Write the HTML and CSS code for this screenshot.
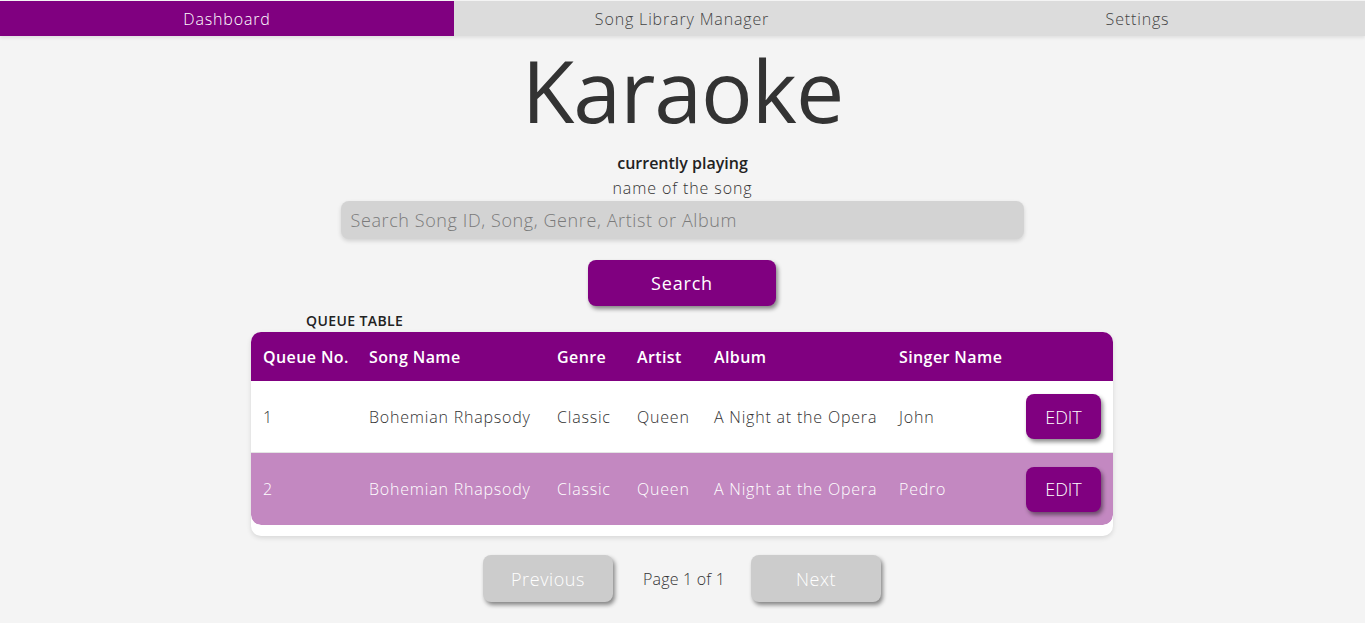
FILE: index.html
```html
<!DOCTYPE html>
<html lang="en">
<head>
<meta charset="utf-8">
<title>Karaoke</title>
<link rel="stylesheet" href="styles.css">
</head>
<body>
<nav class="tabs">
  <a class="tab active">Dashboard</a>
  <a class="tab">Song Library Manager</a>
  <a class="tab">Settings</a>
</nav>
<main class="page">
  <h1 class="title">Karaoke</h1>
  <div class="now">
    <div class="now-label">currently playing</div>
    <div class="now-song">name of the song</div>
  </div>
  <input class="search-input" type="text" placeholder="Search Song ID, Song, Genre, Artist or Album">
  <button class="search-btn">Search</button>
  <section class="queue">
    <div class="queue-label">QUEUE TABLE</div>
    <div class="queue-card">
      <table class="queue-table">
        <colgroup>
          <col class="c-no"><col class="c-song"><col class="c-genre"><col class="c-artist"><col class="c-album"><col class="c-singer"><col class="c-act">
        </colgroup>
        <thead>
          <tr><th>Queue No.</th><th>Song Name</th><th>Genre</th><th>Artist</th><th>Album</th><th>Singer Name</th><th></th></tr>
        </thead>
        <tbody>
          <tr><td>1</td><td>Bohemian Rhapsody</td><td>Classic</td><td>Queen</td><td>A Night at the Opera</td><td>John</td><td><button class="edit-btn">EDIT</button></td></tr>
          <tr class="alt"><td>2</td><td>Bohemian Rhapsody</td><td>Classic</td><td>Queen</td><td>A Night at the Opera</td><td>Pedro</td><td><button class="edit-btn">EDIT</button></td></tr>
        </tbody>
      </table>
    </div>
  </section>
  <div class="pager">
    <button class="pager-btn">Previous</button>
    <span class="pager-info">Page 1 of 1</span>
    <button class="pager-btn">Next</button>
  </div>
</main>
</body>
</html>
```

FILE: styles.css
```css
* { box-sizing: border-box; }
body {
  margin: 0;
  background: #f4f4f4;
  font-family: "Open Sans", "Noto Sans", sans-serif;
  color: #333;
}
.tabs {
  display: grid;
  grid-template-columns: 454px 456px 455px;
  height: 36px;
  padding-top: 1px;
  background: #dcdcdc;
  border-top: 1px solid #f4f4f4;
  box-shadow: 0 2px 3px rgba(0,0,0,0.08);
}
.tab {
  display: flex;
  align-items: center;
  justify-content: center;
  margin-top: -1px;
  color: #444;
  font-size: 16px;
  font-weight: 300;
  letter-spacing: 0.85px;
}
.tab.active {
  background: #800080;
  color: #fff;
}
.page {
  display: flex;
  flex-direction: column;
  align-items: center;
}
.title {
  margin: 11px 0 0;
  font-size: 86px;
  line-height: 86px;
  font-weight: 400;
  color: #333;
  letter-spacing: -1px;
}
.now {
  margin-top: 18px;
  text-align: center;
  font-size: 16px;
  line-height: 25px;
}
.now-label { font-weight: 600; color: #222; }
.now-song { font-weight: 300; color: #333; letter-spacing: 0.9px; }
.search-input {
  width: 683px;
  height: 38px;
  margin-right: 1px;
  border: none;
  border-radius: 8px;
  background: #d3d3d3;
  padding: 0 10px;
  font-family: inherit;
  font-size: 18px;
  font-weight: 300;
  letter-spacing: 0.6px;
  color: #333;
  box-shadow: 0 2px 4px rgba(0,0,0,0.15);
  outline: none;
}
.search-input::placeholder { color: #7a7a7a; }
.search-btn {
  margin-top: 21px;
  margin-right: 1px;
  width: 188px;
  height: 46px;
  border: none;
  border-radius: 8px;
  background: #800080;
  color: #fff;
  font-family: inherit;
  font-size: 18px;
  font-weight: 400;
  letter-spacing: 0.8px;
  box-shadow: 2px 3px 4px rgba(0,0,0,0.45);
}
.queue {
  width: 862px;
  margin-top: 4px;
  margin-right: 1px;
}
.queue-label {
  padding-left: 55px;
  font-size: 14px;
  line-height: 22px;
  font-weight: 600;
  letter-spacing: 0.4px;
  color: #222;
}
.queue-card {
  background: #fff;
  border-radius: 10px;
  padding-bottom: 11px;
  box-shadow: 0 2px 5px rgba(0,0,0,0.12);
}
.queue-table {
  width: 100%;
  table-layout: fixed;
  border-collapse: separate;
  border-spacing: 0;
  border-radius: 10px;
  overflow: hidden;
  font-size: 16px;
}
.c-no { width: 106px; }
.c-song { width: 188px; }
.c-genre { width: 80px; }
.c-artist { width: 77px; }
.c-album { width: 185px; }
.c-singer { width: 127px; }
.c-act { width: 99px; }
.queue-table th {
  height: 49px;
  padding: 0 0 0 12px;
  background: #800080;
  color: #fff;
  text-align: left;
  font-weight: 600;
  white-space: nowrap;
  letter-spacing: 0.4px;
}
.queue-table td {
  height: 72px;
  padding: 0 0 0 12px;
  font-weight: 300;
  color: #333;
  white-space: nowrap;
  letter-spacing: 0.8px;
  border-bottom: 1px solid #e4e4e4;
}
.queue-table tr.alt td {
  background: #c388c1;
  color: #fff;
  border-bottom: none;
}
.queue-table tr.alt td:first-child { border-bottom-left-radius: 10px; }
.queue-table tr.alt td:last-child { border-bottom-right-radius: 10px; }
.edit-btn {
  width: 75px;
  height: 45px;
  border: none;
  border-radius: 8px;
  background: #800080;
  color: #fff;
  font-family: inherit;
  font-size: 18px;
  font-weight: 300;
  letter-spacing: 0;
  box-shadow: 2px 3px 4px rgba(0,0,0,0.45);
  vertical-align: middle;
}
.pager {
  margin-top: 19px;
  margin-right: 1px;
  padding-bottom: 10px;
  display: flex;
  align-items: center;
  gap: 30px;
}
.pager-btn {
  width: 130px;
  height: 47px;
  border: none;
  border-radius: 8px;
  background: #cccccc;
  color: #fff;
  font-family: inherit;
  font-size: 18px;
  font-weight: 300;
  letter-spacing: 0.6px;
  box-shadow: 2px 3px 4px rgba(0,0,0,0.45);
}
.pager-info {
  width: 78px;
  font-size: 16px;
  font-weight: 300;
  color: #333;
  white-space: nowrap;
  letter-spacing: 0.2px;
}
```
